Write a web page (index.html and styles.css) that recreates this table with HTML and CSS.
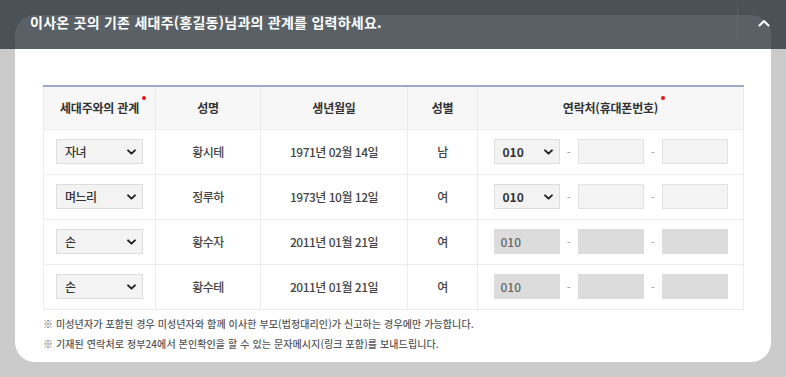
FILE: index.html
```html
<!DOCTYPE html>
<html lang="ko">
<head>
<meta charset="utf-8">
<link rel="stylesheet" href="styles.css">
</head>
<body>
<div class="card">
  <table class="rel-table">
    <colgroup>
      <col class="c1"><col class="c2"><col class="c3"><col class="c4"><col class="c5">
    </colgroup>
    <thead>
      <tr>
        <th><span class="req">세대주와의 관계</span></th>
        <th>성명</th>
        <th>생년월일</th>
        <th>성별</th>
        <th><span class="req">연락처(휴대폰번호)</span></th>
      </tr>
    </thead>
    <tbody>
      <tr>
        <td><div class="sel rel"><span>자녀</span><svg class="chev" viewBox="0 0 10 6"><path d="M1.2 1.2 L5 4.8 L8.8 1.2"/></svg></div></td>
        <td>황시테</td>
        <td>1971년 02월 14일</td>
        <td>남</td>
        <td><div class="phone"><div class="sel tel"><span>010</span><svg class="chev" viewBox="0 0 10 6"><path d="M1.2 1.2 L5 4.8 L8.8 1.2"/></svg></div><span class="dash">-</span><div class="inp"></div><span class="dash">-</span><div class="inp"></div></div></td>
      </tr>
      <tr>
        <td><div class="sel rel"><span>며느리</span><svg class="chev" viewBox="0 0 10 6"><path d="M1.2 1.2 L5 4.8 L8.8 1.2"/></svg></div></td>
        <td>정루하</td>
        <td>1973년 10월 12일</td>
        <td>여</td>
        <td><div class="phone"><div class="sel tel"><span>010</span><svg class="chev" viewBox="0 0 10 6"><path d="M1.2 1.2 L5 4.8 L8.8 1.2"/></svg></div><span class="dash">-</span><div class="inp"></div><span class="dash">-</span><div class="inp"></div></div></td>
      </tr>
      <tr>
        <td><div class="sel rel"><span>손</span><svg class="chev" viewBox="0 0 10 6"><path d="M1.2 1.2 L5 4.8 L8.8 1.2"/></svg></div></td>
        <td>황수자</td>
        <td>2011년 01월 21일</td>
        <td>여</td>
        <td><div class="phone"><div class="inp tel dis">010</div><span class="dash">-</span><div class="inp dis"></div><span class="dash">-</span><div class="inp dis"></div></div></td>
      </tr>
      <tr>
        <td><div class="sel rel"><span>손</span><svg class="chev" viewBox="0 0 10 6"><path d="M1.2 1.2 L5 4.8 L8.8 1.2"/></svg></div></td>
        <td>황수테</td>
        <td>2011년 01월 21일</td>
        <td>여</td>
        <td><div class="phone"><div class="inp tel dis">010</div><span class="dash">-</span><div class="inp dis"></div><span class="dash">-</span><div class="inp dis"></div></div></td>
      </tr>
    </tbody>
  </table>
  <ul class="notes">
    <li>※ 미성년자가 포함된 경우 미성년자와 함께 이사한 부모(법정대리인)가 신고하는 경우에만 가능합니다.</li>
    <li>※ 기재된 연락처로 정부24에서 본인확인을 할 수 있는 문자메시지(링크 포함)를 보내드립니다.</li>
  </ul>
</div>
<div class="overlay">
  <h1 class="title">이사온 곳의 기존 세대주(홍길동)님과의 관계를 입력하세요.</h1>
  <span class="vline"></span>
  <svg class="up" viewBox="0 0 12 8"><path d="M1.5 6.5 L6 2 L10.5 6.5"/></svg>
</div>
</body>
</html>
```

FILE: styles.css
```css
* { box-sizing: border-box; }
html, body {
  margin: 0;
  padding: 0;
  background: #cbcbcb;
  font-family: "Noto Sans CJK KR", "Noto Sans", sans-serif;
  color: #333;
}
body { width: 786px; height: 377px; overflow: hidden; position: relative; }

.card {
  margin: 15px 15px 0 15px;
  width: 756px;
  height: 347px;
  background: #fff;
  border-radius: 20px;
  padding: 70px 28px 0 28px;
}

.rel-table {
  width: 700px;
  border-collapse: collapse;
  table-layout: fixed;
  border-top: 2px solid #9ea8c4;
}
.c1 { width: 112px; }
.c2 { width: 105px; }
.c3 { width: 147px; }
.c4 { width: 70px; }
.c5 { width: 266px; }

.rel-table th {
  height: 43px;
  background: #f7f7f7;
  font-size: 12px;
  font-weight: 700;
  letter-spacing: -0.2px;
  color: #333;
  border: 1px solid #ececec;
  border-top: none;
  padding: 0;
}
.rel-table td {
  height: 45px;
  font-size: 12px;
  letter-spacing: -0.5px;
  color: #444;
  font-weight: 500;
  text-align: center;
  border: 1px solid #ececec;
  padding: 0;
}
.req { position: relative; }
.req::after {
  content: "";
  position: absolute;
  right: -7px;
  top: -3px;
  width: 4px;
  height: 4px;
  border-radius: 50%;
  background: #e8141c;
}

.sel {
  height: 25px;
  background: #f3f3f3;
  border: 1px solid #dedede;
  display: flex;
  align-items: center;
  justify-content: space-between;
  padding: 0 6px 0 8px;
  font-size: 12px;
  color: #333;
}
.rel { width: 87px; margin: 0 auto; }
.chev { width: 9px; height: 6px; }
.chev path { fill: none; stroke: #222; stroke-width: 2.2; stroke-linecap: round; stroke-linejoin: round; }

.phone {
  display: flex;
  align-items: center;
  justify-content: center;
}
.tel { width: 66px; font-weight: 700; }
.sel.tel { letter-spacing: 0; }
.dash {
  width: 18px;
  text-align: center;
  color: #aaa;
  font-size: 11px;
}
.inp {
  width: 66px;
  height: 25px;
  background: #f4f4f4;
  border: 1px solid #e2e2e2;
}
.inp.dis {
  background: #dcdcdc;
  border-color: #dcdcdc;
  color: #666;
  font-size: 12px;
  font-weight: 500;
  letter-spacing: 0;
  text-align: left;
  padding-left: 6px;
  line-height: 23px;
}

.notes {
  list-style: none;
  margin: 4px 0 0 0;
  padding: 0;
}
.notes li {
  font-size: 10px;
  letter-spacing: 0.1px;
  color: #555;
  font-weight: 500;
  line-height: 20px;
}

.overlay {
  position: absolute;
  left: 0;
  top: 0;
  width: 786px;
  height: 49px;
  background: rgba(18, 30, 38, 0.7);
}
.title {
  margin: 0;
  position: absolute;
  left: 30px;
  top: 12px;
  font-size: 14px;
  line-height: 20px;
  font-weight: 700;
  letter-spacing: 0.25px;
  color: #fff;
}
.vline {
  position: absolute;
  left: 737px;
  top: 5px;
  width: 1px;
  height: 36px;
  background: rgba(90, 110, 160, 0.5);
}
.up {
  position: absolute;
  left: 758px;
  top: 19px;
  width: 12px;
  height: 8px;
}
.up path { fill: none; stroke: #fff; stroke-width: 2; stroke-linecap: round; stroke-linejoin: round; }
```
